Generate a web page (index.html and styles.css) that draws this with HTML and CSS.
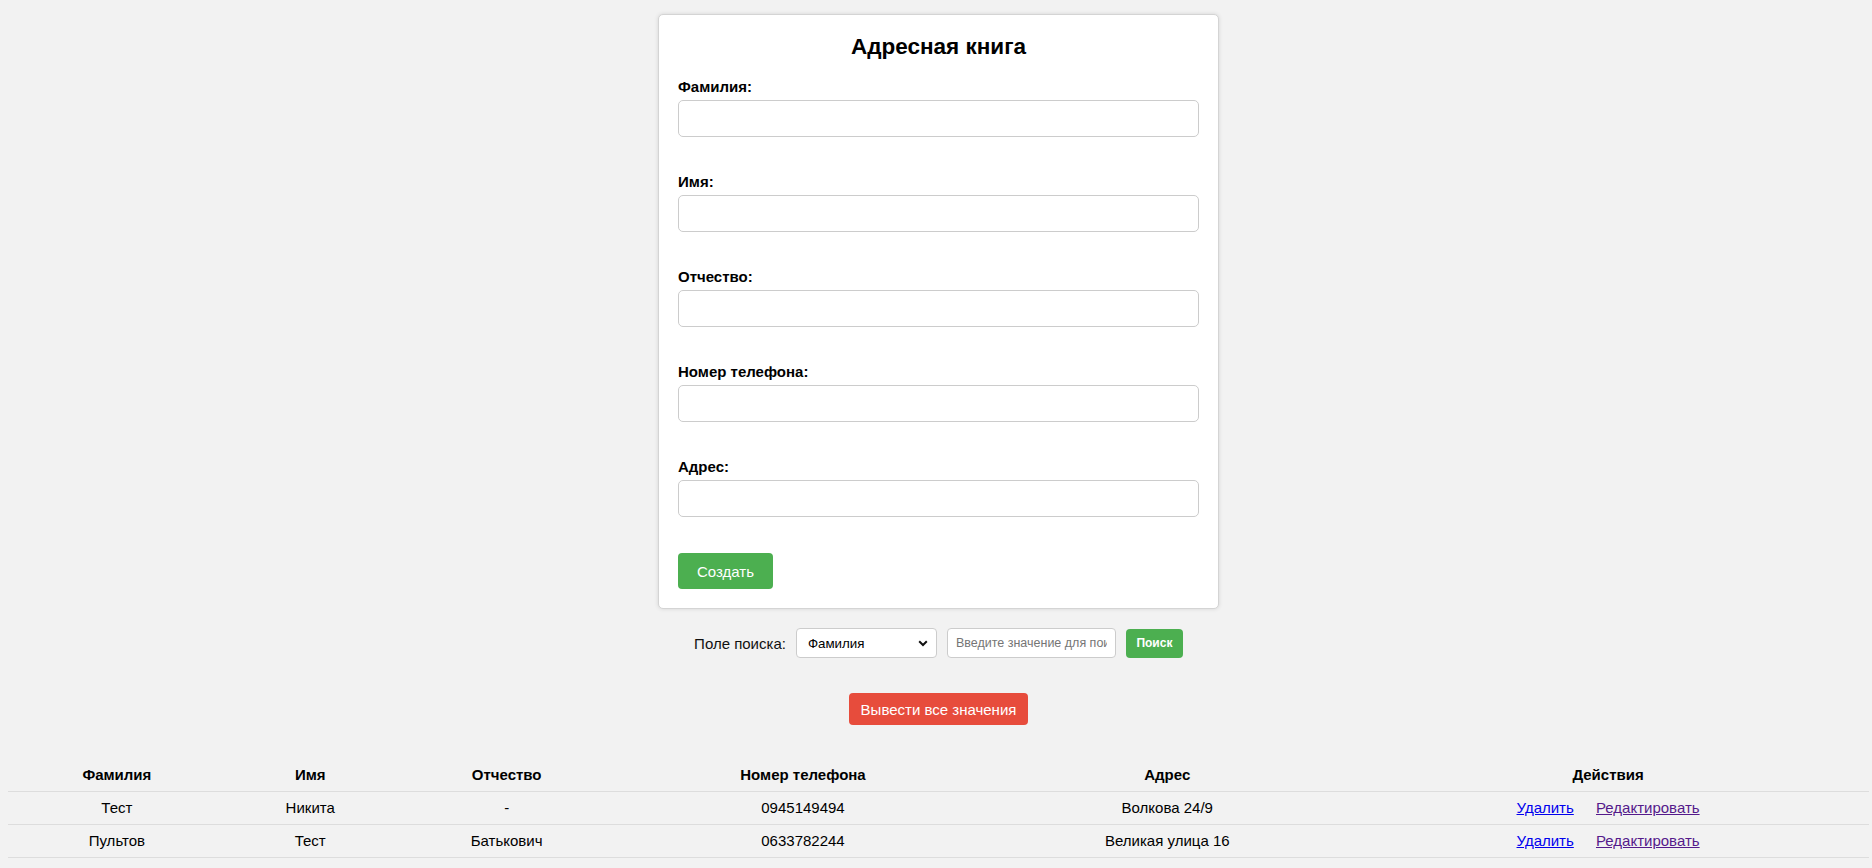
FILE: index.html
```html
<!DOCTYPE html>
<html lang="ru">
<head>
<meta charset="utf-8">
<title>Адресная книга</title>
<link rel="stylesheet" href="styles.css">
</head>
<body>
<div class="card">
  <h2 class="title">Адресная книга</h2>
  <form class="form">
    <div class="group">
      <label class="label">Фамилия:</label>
      <input class="field" type="text">
    </div>
    <div class="group">
      <label class="label">Имя:</label>
      <input class="field" type="text">
    </div>
    <div class="group">
      <label class="label">Отчество:</label>
      <input class="field" type="text">
    </div>
    <div class="group">
      <label class="label">Номер телефона:</label>
      <input class="field" type="text">
    </div>
    <div class="group">
      <label class="label">Адрес:</label>
      <input class="field" type="text">
    </div>
    <button class="btn-create" type="button">Создать</button>
  </form>
</div>

<div class="search">
  <span class="search-label">Поле поиска:</span>
  <span class="select-wrap">
    <select class="search-select">
      <option>Фамилия</option>
      <option>Имя</option>
      <option>Отчество</option>
      <option>Номер телефона</option>
      <option>Адрес</option>
    </select>
    <svg class="chevron" width="10" height="7" viewBox="0 0 10 7"><path d="M1.2 1.3 L5 5 L8.8 1.3" fill="none" stroke="#111" stroke-width="2"/></svg>
  </span>
  <input class="search-input" type="text" placeholder="Введите значение для поиска">
  <button class="btn-search" type="button">Поиск</button>
</div>

<div class="all-wrap">
  <button class="btn-all" type="button">Вывести все значения</button>
</div>

<table class="table">
  <colgroup>
    <col class="col-last">
    <col class="col-first">
    <col class="col-middle">
    <col class="col-phone">
    <col class="col-address">
    <col class="col-actions">
  </colgroup>
  <thead>
    <tr>
      <th>Фамилия</th>
      <th>Имя</th>
      <th>Отчество</th>
      <th>Номер телефона</th>
      <th>Адрес</th>
      <th>Действия</th>
    </tr>
  </thead>
  <tbody>
    <tr>
      <td>Тест</td>
      <td>Никита</td>
      <td>-</td>
      <td>0945149494</td>
      <td>Волкова 24/9</td>
      <td><a class="link" href="#">Удалить</a> <a class="link visited" href="#">Редактировать</a></td>
    </tr>
    <tr>
      <td>Пультов</td>
      <td>Тест</td>
      <td>Батькович</td>
      <td>0633782244</td>
      <td>Великая улица 16</td>
      <td><a class="link" href="#">Удалить</a> <a class="link visited" href="#">Редактировать</a></td>
    </tr>
  </tbody>
</table>
</body>
</html>
```
FILE: styles.css
```css
body {
  margin: 8px 3px 8px 8px;
  background: #f2f2f2;
  font-family: "Liberation Sans", Arial, sans-serif;
  color: #000;
}

.card {
  box-sizing: border-box;
  width: 561px;
  margin: 6px auto 0;
  padding: 19px;
  background: #fff;
  border: 1px solid #d4d4d4;
  border-radius: 5px;
  box-shadow: 0 0 4px rgba(0, 0, 0, 0.12);
}

.title {
  margin: 0 0 18px;
  text-align: center;
  font-size: 22.5px;
  line-height: 26px;
  font-weight: bold;
}

.form {
  margin: 0;
}

.group {
  margin-bottom: 36px;
}

.label {
  display: block;
  margin-bottom: 5px;
  font-size: 15px;
  line-height: 17px;
  font-weight: bold;
}

.field {
  display: block;
  box-sizing: border-box;
  width: 100%;
  height: 37px;
  padding: 8px;
  border: 1px solid #ccc;
  border-radius: 5px;
  font-family: inherit;
  font-size: 14px;
  background: #fff;
}

.btn-create {
  display: block;
  height: 36px;
  padding: 0 19px;
  border: none;
  border-radius: 4px;
  background: #4caf50;
  color: #fff;
  font-family: inherit;
  font-size: 15px;
}

.search {
  display: flex;
  justify-content: center;
  align-items: center;
  gap: 10px;
  margin-top: 19px;
}

.search-label {
  font-size: 15px;
  color: #111;
}

.select-wrap {
  position: relative;
  display: block;
}

.search-select {
  display: block;
  box-sizing: border-box;
  width: 141px;
  height: 30px;
  padding: 0 11px;
  border: 1px solid #ccc;
  border-radius: 4px;
  background: #fff;
  font-family: inherit;
  font-size: 13.33px;
  color: #000;
  appearance: none;
  -webkit-appearance: none;
}

.chevron {
  position: absolute;
  right: 9px;
  top: 12px;
  pointer-events: none;
}

.search-input {
  box-sizing: border-box;
  width: 169px;
  height: 30px;
  padding: 0 8px;
  border: 1px solid #ccc;
  border-radius: 4px;
  background: #fff;
  font-family: inherit;
  font-size: 12.5px;
}

.search-input::placeholder {
  color: #757575;
}

.btn-search {
  box-sizing: border-box;
  width: 57px;
  height: 29px;
  padding: 0;
  border: none;
  border-radius: 4px;
  background: #4caf50;
  color: #fff;
  font-family: inherit;
  font-size: 12px;
  font-weight: bold;
}

.all-wrap {
  display: flex;
  justify-content: center;
  margin-top: 35px;
}

.btn-all {
  box-sizing: border-box;
  height: 32px;
  padding: 0 12px;
  border: none;
  border-radius: 4px;
  background: #e74c3c;
  color: #fff;
  font-family: inherit;
  font-size: 15px;
}

.table {
  width: 100%;
  margin-top: 34px;
  border-collapse: collapse;
  table-layout: fixed;
  font-size: 15px;
}

.col-last { width: 11.7%; }
.col-first { width: 9.08%; }
.col-middle { width: 12.03%; }
.col-phone { width: 19.82%; }
.col-address { width: 19.33%; }
.col-actions { width: 28.04%; }

.table th,
.table td {
  padding: 8px;
  line-height: 16px;
  text-align: center;
  border-bottom: 1px solid #ddd;
}

.table th {
  font-weight: bold;
}

.link {
  margin: 0 9px;
  color: #0000ee;
  text-decoration: underline;
}

.link.visited {
  color: #551a8b;
}
```
